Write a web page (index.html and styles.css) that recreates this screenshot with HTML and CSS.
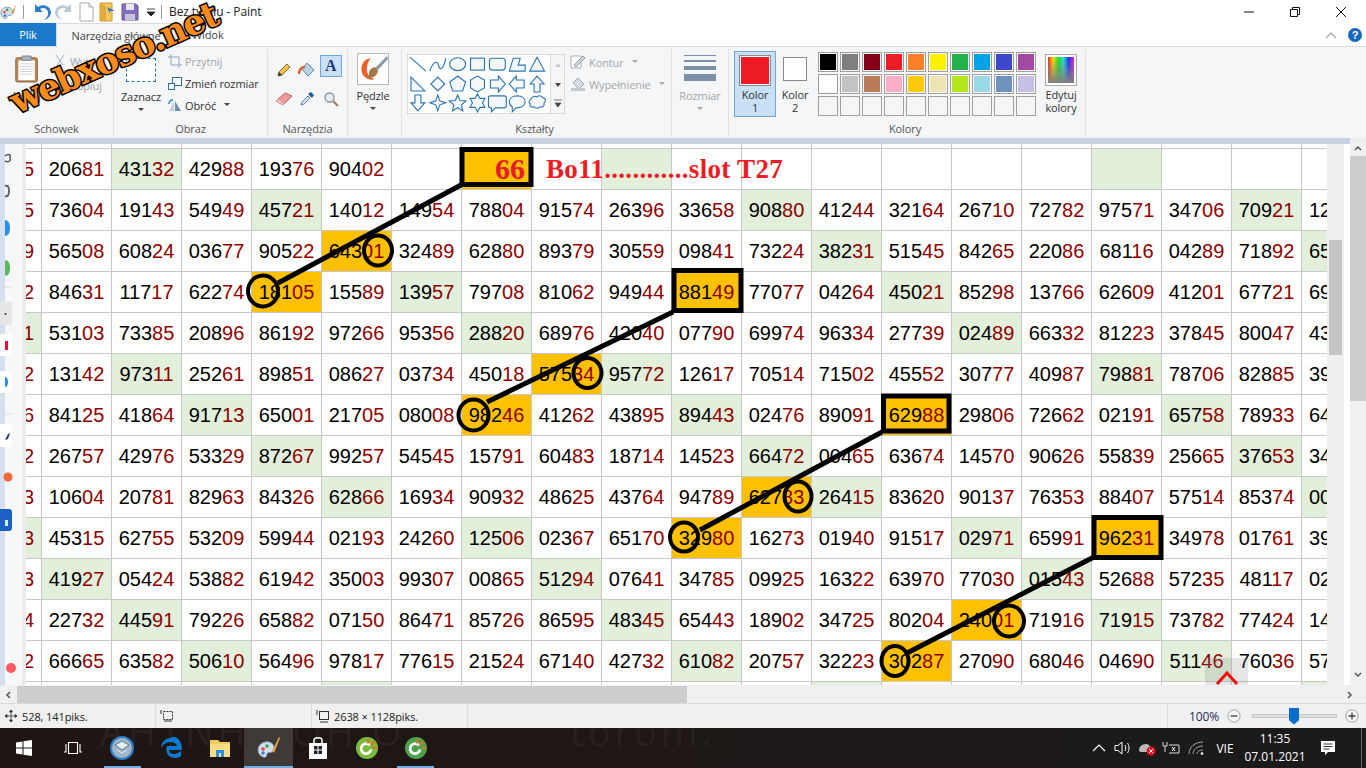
FILE: index.html
```html
<!DOCTYPE html>
<html lang="pl">
<head>
    <meta charset="UTF-8">
    <title>Bez tytułu - Paint</title>
    <link rel="stylesheet" href="styles.css">
</head>
<body>
    <div class="titlebar">
        <div class="quick">
            <svg class="q-icon" width="18" height="18" viewBox="0 0 20 20"><path d="M1 11c0-5 5-7 9-6 4 1 5 5 3 8-2 2-4 0-5 2s-1 3-3 2c-3-1-4-3-4-6z" fill="#cfe0ee" stroke="#7c98b0"/><circle cx="5" cy="10" r="1.5" fill="#e8483c"/><circle cx="8" cy="7.500" r="1.500" fill="#4a9a3c"/><circle cx="5.500" cy="14" r="1.500" fill="#3d7fd0"/><path d="M18 1l-5 10 2 1z" fill="#e58a2c"/></svg>
            <span class="q-sep"></span>
            <svg class="q-icon" width="20" height="20" viewBox="0 0 20 20"><path d="M3 2v8h8L8 7c3-2 7-1 8 3 .5 3-1 6-4 8 5-1 7-5 7-8-1-6-8-9-13-5z" fill="#2d7cc8"/></svg>
            <svg class="q-icon" width="20" height="20" viewBox="0 0 20 20"><path d="M17 2v8H9l3-3c-3-2-7-1-8 3-.5 3 1 6 4 8-5-1-7-5-7-8 1-6 8-9 13-5z" fill="#b9cad9"/></svg>
            <svg class="q-icon" width="20" height="20" viewBox="0 0 20 20"><path d="M4 1h9l4 4v14H4z" fill="#fff" stroke="#a8a8a8"/><path d="M13 1v4h4" fill="#eee" stroke="#a8a8a8"/></svg>
            <svg class="q-icon" width="20" height="20" viewBox="0 0 20 20"><path d="M2 1h12v18H2z" fill="#f3c95f" stroke="#c49a35"/><path d="M9 5l8 4-5 0v3z" fill="#2d7cc8"/><path d="M2 1l6 3v15l-6-1z" fill="#e4a93c"/></svg>
            <svg class="q-icon" width="20" height="20" viewBox="0 0 20 20"><path d="M2 2h14l2 2v14H2z" fill="#8470b8" stroke="#62508f"/><path d="M6 2h8v6H6z" fill="#e8e6f2"/><path d="M5 12h10v6H5z" fill="#c7bfdd"/></svg>
            <svg class="q-drop" width="10" height="10" viewBox="0 0 10 10"><path d="M1 1h8M1 4h8l-4 4z" fill="#222" stroke="#222" stroke-width=".8"/></svg>
            <span class="q-sep"></span>
            <span class="doc-title">Bez tytułu - Paint</span>
        </div>
        <div class="winctl">
            <svg width="46" height="22" viewBox="0 0 46 22"><path d="M18 11h10" stroke="#111"/></svg>
            <svg width="46" height="22" viewBox="0 0 46 22"><path d="M18.500 8.500h7v7h-7zM20.500 8.500v-2h7v7h-2" fill="none" stroke="#111"/></svg>
            <svg width="46" height="22" viewBox="0 0 46 22"><path d="M18 6l10 10M28 6L18 16" stroke="#111"/></svg>
        </div>
    </div>

    <div class="tabs">
        <div class="tab-file">Plik</div>
        <div class="tab tab-on">Narzędzia główne</div>
        <div class="tab">Widok</div>
        <div class="tabs-right">
            <svg width="14" height="8" viewBox="0 0 14 8"><path d="M2 7l5-5 5 5" fill="none" stroke="#aaa" stroke-width="1.300"/></svg>
            <span class="help">?</span>
        </div>
    </div>

    <div class="ribbon">
        <section class="group g-clip">
            <div class="group-body">
                <div class="big-btn paste">
                    <svg width="26" height="30" viewBox="0 0 30 32"><rect x="2" y="3" width="25" height="28" rx="2" fill="#b9865a" stroke="#8a6038"/><rect x="5" y="6" width="19" height="23" fill="#fff"/><path d="M7 10h15M7 13h15M7 16h15M7 19h15M7 22h15" stroke="#c6cbd2"/><rect x="9" y="1" width="11" height="5" rx="1" fill="#aab3bd" stroke="#747c86"/></svg>
                    <span>Wklej</span>
                    <i class="caret"></i>
                </div>
                <div class="small-col clip-col">
                    <div class="small off"><svg width="14" height="14" viewBox="0 0 14 14"><path d="M3 1l7 10M11 1L4 11" stroke="#a9b0b8" fill="none"/></svg>Wytnij</div>
                    <div class="small off"><svg width="14" height="14" viewBox="0 0 14 14"><path d="M2 2h7v10H2z" fill="#fff" stroke="#b5bcc4"/><path d="M4 4h3M4 6h3M4 8h3" stroke="#c6cbd2"/></svg>Kopiuj</div>
                </div>
            </div>
            <h3>Schowek</h3>
        </section>

        <section class="group g-image">
            <div class="group-body">
                <div class="big-btn select">
                    <span class="dashed"></span>
                    <span>Zaznacz</span>
                    <i class="caret"></i>
                </div>
                <div class="small-col image-col">
                    <div class="small off"><svg width="14" height="14" viewBox="0 0 14 14"><path d="M3 0v11h11M0 3h11v11" fill="none" stroke="#8ea3bc"/></svg>Przytnij</div>
                    <div class="small"><svg width="14" height="14" viewBox="0 0 14 14"><rect x="4.500" y="1.500" width="9" height="8" fill="#fff" stroke="#2a6fa8"/><rect x=".500" y="7.500" width="6" height="6" fill="#fff" stroke="#2a6fa8"/></svg>Zmień rozmiar</div>
                    <div class="small"><svg width="14" height="14" viewBox="0 0 14 14"><path d="M7 13V3l6 10z" fill="#6f8db0"/><path d="M1 13l5-9v9z" fill="#c8ccd0"/><path d="M1 6c0-3 2-4 4-4" fill="none" stroke="#2a86d0" stroke-width="1.500"/></svg>Obróć<i class="caret side"></i></div>
                </div>
            </div>
            <h3>Obraz</h3>
        </section>

        <section class="group g-tools">
            <div class="tool-grid">
                <span class="tool"><svg width="16" height="16" viewBox="0 0 16 16"><path d="M2 14l1-4 8-8 3 3-8 8z" fill="#f2c14e" stroke="#8a6a20"/><path d="M2 14l1-4 3 3z" fill="#333"/></svg></span>
                <span class="tool"><svg width="18" height="18" viewBox="0 0 18 18"><path d="M9 2l7 7-6 6-6-7z" fill="#b9d4ea" stroke="#5a86ab"/><path d="M1 13c0-5 3-7 6-7" fill="none" stroke="#e0622c" stroke-width="2.500"/></svg></span>
                <span class="tool tool-on">A</span>
                <span class="tool"><svg width="18" height="16" viewBox="0 0 18 16"><path d="M1 10l9-8 7 3-9 9z" fill="#f29a9a" stroke="#b56565"/><path d="M1 10l7 4 1-1-6-5z" fill="#e9c0c0"/></svg></span>
                <span class="tool"><svg width="16" height="16" viewBox="0 0 16 16"><path d="M2 14l1-3 6-6 2 2-6 6z" fill="#d6e4f0" stroke="#627f99"/><path d="M9 3l3-2 3 3-2 3z" fill="#1f5f96"/></svg></span>
                <span class="tool"><svg width="16" height="16" viewBox="0 0 16 16"><circle cx="6.500" cy="6.500" r="4.500" fill="#e2edf6" stroke="#8a949e" stroke-width="1.300"/><path d="M10 10l5 5" stroke="#a87a45" stroke-width="2"/></svg></span>
            </div>
            <h3>Narzędzia</h3>
        </section>

        <section class="group g-brush">
            <div class="group-body">
                <div class="big-btn">
                    <svg class="brush-icon" width="32" height="32" viewBox="0 0 32 32"><rect x=".500" y=".500" width="31" height="31" fill="#fff" stroke="#b8b8b8"/><path d="M14 5c-8 1-11 8-9 15 2 5 8 8 13 6-5-1-9-5-8-11 0-4 2-8 4-10z" fill="#e8622a"/><path d="M30 3L18 15l2 3L31 6z" fill="#8e9aa6"/><path d="M18 14c-4 1-6 3-6 7 0 2-1 3-3 4 5 1 11-1 12-7z" fill="#a5784a"/></svg>
                    <span>Pędzle</span>
                    <i class="caret"></i>
                </div>
            </div>
        </section>

        <section class="group g-shapes">
            <div class="group-body">
                <div class="gallery">
                    <svg class="gallery-shapes" width="143" height="58" viewBox="0 0 143 58" fill="#f4f8fc" stroke="#2b73ae" stroke-width="1.100">
                        <path d="M2 2l16 14" fill="none"/>
                        <path d="M22 16C26 4 30 6 31 11s5 3 7-8" fill="none"/>
                        <ellipse cx="50" cy="9" rx="8" ry="6.500"/>
                        <rect x="63" y="3" width="14" height="12"/>
                        <rect x="82" y="3" width="16" height="12" rx="3"/>
                        <path d="M102 16l4-13h7l-2 7h7v6z"/>
                        <path d="M130 2l7.500 14h-15z"/>
                        <path d="M3 22v14h14z"/>
                        <path d="M30 22l7 7-7 7-7-7z"/>
                        <path d="M50 21l8 6-3 9H45l-3-9z"/>
                        <path d="M70 21l7 4v8l-7 4-7-4v-8z"/>
                        <path d="M83 25h8v-4l7 8-7 8v-4h-8z"/>
                        <path d="M117 25h-8v-4l-7 8 7 8v-4h8z"/>
                        <path d="M130 21l7 8h-4v8h-6v-8h-4z"/>
                        <path d="M7 40h6v8h4l-7 8-7-8h4z"/>
                        <path d="M30 40l2 6 6 2-6 2-2 6-2-6-6-2 6-2z"/>
                        <path d="M50 40l2.400 5.600 6 .5-4.600 4 1.400 6-5.200-3.200-5.200 3.200 1.400-6-4.600-4 6-.5z"/>
                        <path d="M70 39l2.500 4.500h5L75 48l2.500 4.500h-5L70 57l-2.500-4.500h-5L65 48l-2.500-4.500h5z"/>
                        <path d="M83 41h14q2 0 2 2v8q0 2-2 2h-9l-4 4v-4h-1q-2 0-2-2v-8q0-2 2-2z"/>
                        <path d="M110 41c5 0 8 2.500 8 6s-3 6-8 6h-1l-4 4v-5c-2-1-3-3-3-5 0-3.500 3-6 8-6z"/>
                        <path d="M124 44c1-3 4-3 6-2 2-2 5-1 6 1 3 0 3 4 1 5 1 3-2 5-4 4-2 2-5 2-6 0-3 1-5-1-4-3-2-1-1-4 1-5z"/>
                    </svg>
                    <div class="gallery-scroll">
                        <svg width="14" height="58" viewBox="0 0 14 58"><path d="M4 12l3-4 3 4z" fill="#c4c8cc"/><path d="M4 28l3 4 3-4z" fill="#444"/><path d="M3 45h8M4 48h6l-3 4z" fill="#444" stroke="#444" stroke-width=".7"/></svg>
                    </div>
                </div>
                <div class="small-col shape-col">
                    <div class="small off"><svg width="16" height="16" viewBox="0 0 16 16"><path d="M1 2h10v12H1z" fill="#fff" stroke="#a9b0b8"/><path d="M4 11l9-9 2 2-9 9z" fill="#d0d4d8" stroke="#9aa0a6"/></svg>Kontur<i class="caret side pale"></i></div>
                    <div class="small off"><svg width="16" height="16" viewBox="0 0 16 16"><path d="M8 2l6 6-5 5-6-6z" fill="#d6dde5" stroke="#a0a8b0"/><path d="M1 12h14v3H1z" fill="#c4cad0"/></svg>Wypełnienie<i class="caret side pale"></i></div>
                </div>
            </div>
            <h3>Kształty</h3>
        </section>

        <section class="group g-size">
            <div class="big-btn size off">
                <span class="bars"><i class="b1"></i><i class="b2"></i><i class="b3"></i><i class="b4"></i></span>
                <span>Rozmiar</span>
                <i class="caret pale"></i>
            </div>
        </section>

        <section class="group g-colors">
            <div class="group-body">
                <div class="color-btn color-on">
                    <span class="swatch-big"><i class="red"></i></span>
                    <span>Kolor<br>1</span>
                </div>
                <div class="color-btn color-two">
                    <span class="swatch-mid"></span>
                    <span>Kolor<br>2</span>
                </div>
                <div class="palette">
                    <span class="sw"><i class="c-black"></i></span><span class="sw"><i class="c-gray"></i></span><span class="sw"><i class="c-maroon"></i></span><span class="sw"><i class="c-red"></i></span><span class="sw"><i class="c-orange"></i></span><span class="sw"><i class="c-yellow"></i></span><span class="sw"><i class="c-green"></i></span><span class="sw"><i class="c-sky"></i></span><span class="sw"><i class="c-indigo"></i></span><span class="sw"><i class="c-purple"></i></span>
                    <span class="sw"><i class="c-white"></i></span><span class="sw"><i class="c-silver"></i></span><span class="sw"><i class="c-brown"></i></span><span class="sw"><i class="c-pink"></i></span><span class="sw"><i class="c-gold"></i></span><span class="sw"><i class="c-cream"></i></span><span class="sw"><i class="c-lime"></i></span><span class="sw"><i class="c-ice"></i></span><span class="sw"><i class="c-steel"></i></span><span class="sw"><i class="c-lilac"></i></span>
                    <span class="sw"></span><span class="sw"></span><span class="sw"></span><span class="sw"></span><span class="sw"></span><span class="sw"></span><span class="sw"></span><span class="sw"></span><span class="sw"></span><span class="sw"></span>
                </div>
                <div class="edit-colors">
                    <span class="rainbow"></span>
                    <span>Edytuj<br>kolory</span>
                </div>
            </div>
            <h3>Kolory</h3>
        </section>
    </div>

    <div class="workspace">
        <svg class="dock" width="26" height="542" viewBox="0 0 26 542">
            <path d="M5 12c4-3 6-1 5 2 1 2-1 5-5 3" fill="none" stroke="#555" stroke-width="1.500"/>
            <path d="M5 42c3-1 4 1 4 5s-1 6-4 5" fill="none" stroke="#666" stroke-width="2"/>
            <path d="M5 76c3 0 5 3 5 8s-2 8-5 8z" fill="#2b8fea"/>
            <path d="M5 116c3 0 5 3 5 8s-2 8-5 8z" fill="#5cb860"/>
            <path d="M5 143h7" stroke="#ddd"/>
            <rect x="-5" y="158" width="17" height="23" rx="3" fill="#e6e6e6"/>
            <circle cx="5.500" cy="170" r="1" fill="#333"/>
            <rect x="-5" y="190" width="17" height="22" rx="3" fill="#fff"/>
            <rect x="5" y="197" width="3" height="9" fill="#e8112d"/>
            <rect x="-5" y="227" width="17" height="22" rx="3" fill="#fff"/>
            <path d="M5 233c2 0 3 2 3 5s-1 5-3 5z" fill="#2b8fea"/>
            <path d="M5 270h7" stroke="#ddd"/>
            <rect x="-5" y="280" width="17" height="23" rx="3" fill="#fff"/>
            <path d="M5 296l3-1 2-6-2 1z" fill="#24357f"/>
            <circle cx="8" cy="333" r="4.500" fill="#f4693a"/>
            <rect x="-5" y="365" width="17" height="22" rx="3" fill="#1d5fc4"/>
            <rect x="5" y="376" width="3" height="6" fill="#cfe"/>
            <circle cx="11" cy="524" r="5" fill="#ff5a66"/>
        </svg>

        <div class="sheet">
            <table class="grid">
                <tr class="top"><td></td><td></td><td></td><td></td><td></td><td></td><td></td><td></td><td></td><td></td><td></td><td></td><td></td><td></td><td></td><td></td><td></td><td></td><td></td><td></td></tr>
                <tr><td class="cut"><b>5</b></td><td>206<b>81</b></td><td class="g">431<b>32</b></td><td>429<b>88</b></td><td>193<b>76</b></td><td>904<b>02</b></td><td></td><td class="o big">66</td><td class="note">Bo11............slot T27</td><td class="g"></td><td></td><td></td><td></td><td></td><td></td><td></td><td class="g"></td><td></td><td></td><td></td></tr>
                <tr><td class="cut"><b>5</b></td><td>736<b>04</b></td><td>191<b>43</b></td><td>549<b>49</b></td><td class="g">457<b>21</b></td><td>140<b>12</b></td><td>149<b>54</b></td><td>788<b>04</b></td><td>915<b>74</b></td><td>263<b>96</b></td><td>336<b>58</b></td><td class="g">908<b>80</b></td><td>412<b>44</b></td><td>321<b>64</b></td><td>267<b>10</b></td><td>727<b>82</b></td><td>975<b>71</b></td><td>347<b>06</b></td><td class="g">709<b>21</b></td><td class="lead">12</td></tr>
                <tr><td class="cut"><b>9</b></td><td>565<b>08</b></td><td>608<b>24</b></td><td>036<b>77</b></td><td>905<b>22</b></td><td class="o">643<b>01</b></td><td>324<b>89</b></td><td>628<b>80</b></td><td>893<b>79</b></td><td>305<b>59</b></td><td>098<b>41</b></td><td>732<b>24</b></td><td class="g">382<b>31</b></td><td>515<b>45</b></td><td>842<b>65</b></td><td>220<b>86</b></td><td>681<b>16</b></td><td>042<b>89</b></td><td>718<b>92</b></td><td class="lead g">65</td></tr>
                <tr><td class="cut"><b>2</b></td><td>846<b>31</b></td><td>117<b>17</b></td><td>622<b>74</b></td><td class="o">181<b>05</b></td><td>155<b>89</b></td><td class="g">139<b>57</b></td><td>797<b>08</b></td><td>810<b>62</b></td><td>949<b>44</b></td><td class="o">881<b>49</b></td><td>770<b>77</b></td><td>042<b>64</b></td><td class="g">450<b>21</b></td><td>852<b>98</b></td><td>137<b>66</b></td><td>626<b>09</b></td><td>412<b>01</b></td><td>677<b>21</b></td><td class="lead">69</td></tr>
                <tr><td class="cut g"><b>1</b></td><td>531<b>03</b></td><td>733<b>85</b></td><td>208<b>96</b></td><td>861<b>92</b></td><td>972<b>66</b></td><td>953<b>56</b></td><td class="g">288<b>20</b></td><td>689<b>76</b></td><td>420<b>40</b></td><td>077<b>90</b></td><td>699<b>74</b></td><td>963<b>34</b></td><td>277<b>39</b></td><td class="g">024<b>89</b></td><td>663<b>32</b></td><td>812<b>23</b></td><td>378<b>45</b></td><td>800<b>47</b></td><td class="lead">43</td></tr>
                <tr><td class="cut"><b>2</b></td><td>131<b>42</b></td><td class="g">973<b>11</b></td><td>252<b>61</b></td><td>898<b>51</b></td><td>086<b>27</b></td><td>037<b>34</b></td><td>450<b>18</b></td><td class="o">575<b>34</b></td><td class="g">957<b>72</b></td><td>126<b>17</b></td><td>705<b>14</b></td><td>715<b>02</b></td><td>455<b>52</b></td><td>307<b>77</b></td><td>409<b>87</b></td><td class="g">798<b>81</b></td><td>787<b>06</b></td><td>828<b>85</b></td><td class="lead">39</td></tr>
                <tr><td class="cut"><b>6</b></td><td>841<b>25</b></td><td>418<b>64</b></td><td class="g">917<b>13</b></td><td>650<b>01</b></td><td>217<b>05</b></td><td>080<b>08</b></td><td class="o">982<b>46</b></td><td>412<b>62</b></td><td>438<b>95</b></td><td class="g">894<b>43</b></td><td>024<b>76</b></td><td>890<b>91</b></td><td class="o">629<b>88</b></td><td>298<b>06</b></td><td>726<b>62</b></td><td>021<b>91</b></td><td class="g">657<b>58</b></td><td>789<b>33</b></td><td class="lead">64</td></tr>
                <tr><td class="cut"><b>2</b></td><td>267<b>57</b></td><td>429<b>76</b></td><td>533<b>29</b></td><td class="g">872<b>67</b></td><td>992<b>57</b></td><td>545<b>45</b></td><td>157<b>91</b></td><td>604<b>83</b></td><td>187<b>14</b></td><td>145<b>23</b></td><td class="g">664<b>72</b></td><td>004<b>65</b></td><td>636<b>74</b></td><td>145<b>70</b></td><td>906<b>26</b></td><td>558<b>39</b></td><td>256<b>65</b></td><td class="g">376<b>53</b></td><td class="lead">34</td></tr>
                <tr><td class="cut"><b>3</b></td><td>106<b>04</b></td><td>207<b>81</b></td><td>829<b>63</b></td><td>843<b>26</b></td><td class="g">628<b>66</b></td><td>169<b>34</b></td><td>909<b>32</b></td><td>486<b>25</b></td><td>437<b>64</b></td><td>947<b>89</b></td><td class="o">627<b>83</b></td><td class="g">264<b>15</b></td><td>836<b>20</b></td><td>901<b>37</b></td><td>763<b>53</b></td><td>884<b>07</b></td><td>575<b>14</b></td><td>853<b>74</b></td><td class="lead g">00</td></tr>
                <tr><td class="cut g"><b>3</b></td><td>453<b>15</b></td><td>627<b>55</b></td><td>532<b>09</b></td><td>599<b>44</b></td><td>021<b>93</b></td><td>242<b>60</b></td><td class="g">125<b>06</b></td><td>023<b>67</b></td><td>651<b>70</b></td><td class="o">329<b>80</b></td><td>162<b>73</b></td><td>019<b>40</b></td><td>915<b>17</b></td><td class="g">029<b>71</b></td><td>659<b>91</b></td><td class="o">962<b>31</b></td><td>349<b>78</b></td><td>017<b>61</b></td><td class="lead">39</td></tr>
                <tr><td class="cut"><b>3</b></td><td class="g">419<b>27</b></td><td>054<b>24</b></td><td>538<b>82</b></td><td>619<b>42</b></td><td>350<b>03</b></td><td>993<b>07</b></td><td>008<b>65</b></td><td class="g">512<b>94</b></td><td>076<b>41</b></td><td>347<b>85</b></td><td>099<b>25</b></td><td>163<b>22</b></td><td>639<b>70</b></td><td>770<b>30</b></td><td class="g">015<b>43</b></td><td>526<b>88</b></td><td>572<b>35</b></td><td>481<b>17</b></td><td class="lead">02</td></tr>
                <tr><td class="cut"><b>4</b></td><td>227<b>32</b></td><td class="g">445<b>91</b></td><td>792<b>26</b></td><td>658<b>82</b></td><td>071<b>50</b></td><td>864<b>71</b></td><td>857<b>26</b></td><td>865<b>95</b></td><td class="g">483<b>45</b></td><td>654<b>43</b></td><td>189<b>02</b></td><td>347<b>25</b></td><td>802<b>04</b></td><td class="o">240<b>01</b></td><td>719<b>16</b></td><td class="g">719<b>15</b></td><td>737<b>82</b></td><td>774<b>24</b></td><td class="lead">14</td></tr>
                <tr><td class="cut"><b>2</b></td><td>666<b>65</b></td><td>635<b>82</b></td><td class="g">506<b>10</b></td><td>564<b>96</b></td><td>978<b>17</b></td><td>776<b>15</b></td><td>215<b>24</b></td><td>671<b>40</b></td><td>427<b>32</b></td><td class="g">610<b>82</b></td><td>207<b>57</b></td><td>322<b>23</b></td><td class="o">302<b>87</b></td><td>270<b>90</b></td><td>680<b>46</b></td><td>046<b>90</b></td><td class="g">511<b>46</b></td><td>760<b>36</b></td><td class="lead">57</td></tr>
                <tr><td></td><td></td><td></td><td></td><td></td><td class="g"></td><td></td><td></td><td></td><td></td><td></td><td></td><td class="g"></td><td></td><td></td><td></td><td></td><td></td><td></td><td class="g"></td></tr>
            </table>

            <svg class="marks" width="1301" height="541" viewBox="26 144 1301 541" fill="none" stroke="#000">
                <g stroke-width="5">
                    <rect x="462" y="149.500" width="69" height="35"/>
                    <rect x="674" y="270.500" width="67" height="40"/>
                    <rect x="883.500" y="396" width="65.500" height="35"/>
                    <rect x="1094" y="517.500" width="67" height="40"/>
                    <path d="M278 283L461 185M487 402L673 312M700 530L882 432M907 653L1094 557"/>
                </g>
                <g stroke-width="4">
                    <ellipse cx="263" cy="291" rx="15" ry="15.500"/>
                    <ellipse cx="378" cy="250.500" rx="14" ry="15"/>
                    <ellipse cx="473.500" cy="415" rx="15" ry="15.500"/>
                    <ellipse cx="587.500" cy="373" rx="14" ry="15"/>
                    <ellipse cx="684" cy="537" rx="14" ry="14.500"/>
                    <ellipse cx="798" cy="496.500" rx="13.500" ry="15"/>
                    <ellipse cx="895" cy="661" rx="13.500" ry="15"/>
                    <ellipse cx="1009" cy="621" rx="15" ry="15.500"/>
                </g>
                <rect x="1205" y="658" width="43" height="27" fill="#808080" fill-opacity=".2" stroke="none"/>
                <path d="M1217 684l10-11 10 11" stroke="#f01010" stroke-width="3"/>
            </svg>
        </div>

        <div class="inner-bar"><span class="inner-thumb"></span></div>
        <div class="inner-gap"></div>
        <div class="vscroll">
            <svg width="16" height="16" viewBox="0 0 16 16"><path d="M5 10l3-3 3 3" fill="none" stroke="#555" stroke-width="1.500"/></svg>
            <span class="vthumb"></span>
            <svg class="vdown" width="16" height="16" viewBox="0 0 16 16"><path d="M5 6l3 3 3-3" fill="none" stroke="#555" stroke-width="1.500"/></svg>
        </div>
    </div>

    <div class="hscroll">
        <svg width="17" height="16" viewBox="0 0 17 16"><path d="M10 5L7 8l3 3" fill="none" stroke="#555" stroke-width="1.500"/></svg>
        <span class="hthumb"></span>
        <svg class="hright" width="17" height="16" viewBox="0 0 17 16"><path d="M7 5l3 3-3 3" fill="none" stroke="#555" stroke-width="1.500"/></svg>
    </div>

    <div class="statusbar">
        <div class="st st-pos"><svg width="14" height="14" viewBox="0 0 14 14"><path d="M7 1v12M1 7h12M7 1L5.500 3h3zM7 13l-1.500-2h3zM1 7l2-1.500v3zM13 7l-2-1.500v3z" fill="#333" stroke="#333" stroke-width=".8"/></svg>528, 141piks.</div>
        <div class="st st-sel"><svg width="14" height="14" viewBox="0 0 14 14"><rect x="3.500" y="2.500" width="9" height="8" fill="none" stroke="#333" stroke-dasharray="2 1"/><path d="M1 1v4M4 12h8" stroke="#333"/></svg></div>
        <div class="st st-size"><svg width="14" height="14" viewBox="0 0 14 14"><rect x="3.500" y="2.500" width="9" height="8" fill="none" stroke="#333"/><path d="M1 1v5M4 13h8" stroke="#333"/></svg>2638 × 1128piks.</div>
        <div class="zoom">
            <span class="zoom-val">100%</span>
            <svg width="14" height="14" viewBox="0 0 16 16"><circle cx="8" cy="8" r="7" fill="#f6f6f6" stroke="#999"/><path d="M4 8h8" stroke="#444" stroke-width="1.500"/></svg>
            <span class="zoom-track"><i class="zoom-thumb"></i></span>
            <svg width="14" height="14" viewBox="0 0 16 16"><circle cx="8" cy="8" r="7" fill="#f6f6f6" stroke="#999"/><path d="M4 8h8M8 4v8" stroke="#444" stroke-width="1.500"/></svg>
        </div>
    </div>

    <div class="taskbar">
        <span class="wall">AHTNHICOH.O</span>
        <span class="wall wall-2">toronl.</span>
        <div class="task"><svg width="16" height="16" viewBox="0 0 16 16"><path d="M0 2.500l6.500-1V7.500H0zM7.500 1.300L16 0v7.500H7.500zM0 8.500h6.500v6L0 13.500zM7.500 8.500H16V16l-8.500-1.200z" fill="#fff"/></svg></div>
        <div class="task"><svg width="20" height="14" viewBox="0 0 20 14"><path d="M5.500 1.500h9v11h-9zM3 3v8H1M17 3v8h2" fill="none" stroke="#fff" stroke-width="1.100"/></svg></div>
        <div class="task run"><svg width="24" height="24" viewBox="0 0 24 24"><circle cx="12" cy="12" r="11" fill="#9fb6c9" stroke="#2d7cc8" stroke-width="2"/><path d="M5 9l7-4 7 4-7 5z" fill="#e4edf4" stroke="#5c7487"/><path d="M7 14l5 3 5-3" fill="none" stroke="#e4edf4"/></svg></div>
        <div class="task"><svg width="22" height="22" viewBox="0 0 22 22"><path d="M11 1C5 1 1 6 1 11c2-4 6-6 10-6 4 0 6 3 6 4H7c-2 6 1 12 8 12 2 0 4-.5 6-2v-5c-3 2-5 3-7 3-3 0-5-2-5-4h13c0-7-3-14-11-14z" fill="#0b7ad1"/></svg></div>
        <div class="task"><svg width="22" height="20" viewBox="0 0 22 20"><path d="M1 2h8l2 2h10v15H1z" fill="#f5c85c"/><path d="M1 6h20v13H1z" fill="#fbdc85"/><path d="M7 12h8v7H7z" fill="#2d8fe0"/><path d="M10 15h2v4h-2z" fill="#fbdc85"/></svg></div>
        <div class="task task-on"><svg width="24" height="24" viewBox="0 0 24 24"><path d="M1 14c0-6 6-9 11-8 5 1 6 6 4 9-2 3-5 0-6 3s-1 4-4 3c-3-1-5-4-5-7z" fill="#cfe0ee" stroke="#7c98b0"/><circle cx="6" cy="13" r="1.800" fill="#e8483c"/><circle cx="10" cy="10" r="1.800" fill="#4a9a3c"/><circle cx="6" cy="17" r="1.800" fill="#3d7fd0"/><path d="M22 1l-7 14 2 2 6-15z" fill="#e9a24a"/></svg></div>
        <div class="task"><svg width="20" height="22" viewBox="0 0 20 22"><path d="M1 6h18v16H1z" fill="#fff"/><path d="M6 6V3c0-3 8-3 8 0v3" fill="none" stroke="#fff" stroke-width="1.500"/><path d="M6 9h3.500v3.500H6zM10.500 9H14v3.500h-3.500zM6 13.500h3.500V17H6zM10.500 13.500H14V17h-3.500z" fill="#222"/></svg></div>
        <div class="task"><svg width="24" height="24" viewBox="0 0 24 24"><circle cx="12" cy="12" r="11" fill="#7cba3d"/><path d="M15 9.500a5 5 0 1 0 1 4" fill="none" stroke="#fff" stroke-width="2.800"/><path d="M13.500 3l-.5 4.500M19.500 5.500L16 9M22 11.500l-4 .5" stroke="#ea6a2a" stroke-width="2"/></svg></div>
        <div class="task run"><svg width="24" height="24" viewBox="0 0 24 24"><circle cx="12" cy="12" r="11" fill="#4ea24c"/><path d="M15 9.500a5 5 0 1 0 1 4" fill="none" stroke="#fff" stroke-width="2.800"/><path d="M13.500 3l-.5 4.500M19.500 5.500L16 9M22 11.500l-4 .5" stroke="#ea6a2a" stroke-width="2"/></svg></div>

        <div class="tray">
            <span class="ti"><svg width="14" height="8" viewBox="0 0 14 8"><path d="M1 7l6-6 6 6" fill="none" stroke="#fff" stroke-width="1.200"/></svg></span>
            <span class="ti"><svg width="18" height="16" viewBox="0 0 18 16"><path d="M1 5.500h3L8 2v12L4 10.500H1zM11 5c1 2 1 4 0 6M13.500 3c2 3 2 7 0 10" fill="none" stroke="#fff"/></svg></span>
            <span class="ti"><svg width="18" height="16" viewBox="0 0 18 16"><path d="M1 10c0-3 3-6 7-6 3 0 4 2 4 3 3 0 4 5 0 5H3c-1 0-2-1-2-2z" fill="#bbb"/><circle cx="13" cy="11" r="4.500" fill="#e81123"/><path d="M11 9l4 4M15 9l-4 4" stroke="#fff"/></svg></span>
            <span class="ti"><svg width="18" height="14" viewBox="0 0 18 14"><path d="M1 1v4h4V1M3 5v6M7 4h10v8H7" fill="none" stroke="#ddd"/><path d="M10 6l3 4M13 6l-3 4" stroke="#fff"/></svg></span>
            <span class="ti ti-wifi"><svg width="16" height="14" viewBox="0 0 16 14"><path d="M1 13c0-7 6-12 14-12M5 13c0-4 4-8 10-8M9 13c0-2 2-4 6-4" fill="none" stroke="#aaa"/><circle cx="14" cy="12.500" r="1.300" fill="#fff"/></svg></span>
            <span class="ti ti-lang">VIE</span>
            <span class="ti ti-clock">11:35<br>07.01.2021</span>
            <span class="ti ti-note"><svg width="16" height="16" viewBox="0 0 16 16"><path d="M1 1h14v11H8l-3 3v-3H1z" fill="#fff"/><path d="M3.500 4h9M3.500 6.500h9M3.500 9h6" stroke="#333"/></svg></span>
            <span class="ti-show"></span>
        </div>
    </div>

    <div class="watermark">webxoso.net</div>
</body>
</html>
```

FILE: styles.css
```css
* {
    box-sizing: border-box;
}

html, body {
    margin: 0;
    height: 100%;
}

body {
    width: 1366px;
    height: 768px;
    overflow: hidden;
    display: flex;
    flex-direction: column;
    position: relative;
    background: #f0f0f0;
    color: #333;
    font-family: "Open Sans", "Noto Sans", sans-serif;
    font-size: 11px;
    letter-spacing: -.1px;
}

/* title bar */
.titlebar {
    height: 23px;
    background: #fff;
    display: flex;
    align-items: center;
    justify-content: space-between;
}

.quick {
    display: flex;
    align-items: center;
}

.q-icon {
    margin-right: 2px;
}

.q-icon:first-child {
    margin-right: 5px;
}

.q-sep {
    width: 1px;
    height: 14px;
    background: #9a9a9a;
    margin-right: 8px;
}

.q-drop {
    margin: 2px 5px 0 4px;
}

.doc-title {
    font-size: 12px;
    color: #222;
    margin-left: -1px;
}

.winctl {
    display: flex;
    margin-right: 2px;
}

/* tabs */
.tabs {
    height: 24px;
    background: #fff;
    display: flex;
    align-items: stretch;
    border-bottom: 1px solid #dadbdc;
}

.tab-file {
    width: 56px;
    background: #1979ca;
    color: #fff;
    text-align: center;
    line-height: 23px;
}

.tab {
    padding: 0 16px;
    line-height: 24px;
    color: #444;
}

.tab-on {
    width: 120px;
    padding: 0 3px;
    text-align: center;
    background: #f5f6f7;
    border: 1px solid #dadbdc;
    border-bottom: 0;
    line-height: 23px;
    height: 24px;
    white-space: nowrap;
}

.tabs-right {
    margin-left: auto;
    display: flex;
    align-items: center;
    gap: 10px;
    padding-right: 4px;
}

.help {
    width: 14px;
    height: 14px;
    border-radius: 50%;
    background: #1769c0;
    color: #fff;
    font: bold 11px/14px "Liberation Sans", sans-serif;
    text-align: center;
}

/* ribbon */
.ribbon {
    height: 91px;
    background: #f5f6f7;
    display: flex;
    padding: 2px 0 1px;
}

.group {
    display: flex;
    flex-direction: column;
    border-right: 1px solid #e1e2e4;
    position: relative;
}

.group h3 {
    margin: 0;
    font-size: 11px;
    font-weight: 400;
    color: #555;
    text-align: center;
    line-height: 16px;
    padding-bottom: 0;
}

.group-body {
    flex: 1;
    display: flex;
}

.g-clip { width: 114px; }
.g-image { width: 154px; }
.g-tools { width: 80px; }
.g-brush { width: 54px; }
.g-shapes { width: 270px; }
.g-size { width: 57px; }
.g-colors { width: 357px; }

.g-shapes h3 {
    padding-right: 4px;
}

.g-colors h3 {
    padding-right: 4px;
}

.big-btn {
    display: flex;
    flex-direction: column;
    align-items: center;
    white-space: nowrap;
}

.big-btn span {
    line-height: 15px;
}

.caret {
    display: block;
    width: 0;
    height: 0;
    margin-top: 4px;
    border: 3px solid transparent;
    border-top: 3px solid #444;
    border-bottom: 0;
}

.caret.side {
    display: inline-block;
    margin: 0 0 2px 5px;
    vertical-align: middle;
}

.caret.pale {
    border-top-color: #aaa;
}

.off {
    color: #a3a6aa;
}

.small {
    display: flex;
    align-items: center;
    gap: 3px;
    height: 22px;
    white-space: nowrap;
}

.small-col {
    display: flex;
    flex-direction: column;
}

.paste {
    width: 36px;
    margin: 5px 0 0 9px;
}

.paste svg {
    margin-bottom: 4px;
}

.clip-col {
    margin: 0 0 0 8px;
}

.clip-col .small {
    height: 24px;
}

.select {
    width: 54px;
    padding-top: 9px;
}

.dashed {
    display: block;
    width: 30px;
    height: 24px;
    border: 1px dashed #2a6fa8;
    background: #fff;
    margin-bottom: 7px;
}

.image-col {
    margin: 1px 0 0 0;
}

.tool-grid {
    flex: 1;
    display: grid;
    grid-template-columns: repeat(3, 23.500px);
    grid-template-rows: 29px 29px;
    padding: 6px 0 0 4px;
}

.tool {
    display: flex;
    align-items: center;
    justify-content: center;
}

.tool-on {
    width: 22px;
    height: 22px;
    margin: 0 auto;
    background: #c9e0f7;
    border: 1px solid #6ea8e0;
    font: bold 16px "Liberation Serif", serif;
    color: #1f3b78;
}

.g-brush .big-btn {
    width: 50px;
    margin: 4px 0 0 0;
}

.brush-icon {
    margin-bottom: 3px;
}

.g-shapes .group-body {
    padding: 5px 0 0 5px;
}

.gallery {
    display: flex;
    width: 158px;
    height: 60px;
    background: #fff;
    border: 1px solid #dadbdc;
}

.gallery-shapes {
    display: block;
}

.gallery-scroll {
    width: 14px;
    border-left: 1px solid #dadbdc;
    background: #f5f6f7;
}

.shape-col {
    margin: -3px 0 0 5px;
}

.size {
    height: 100%;
}

.bars {
    display: flex;
    flex-direction: column;
    gap: 4px;
    width: 32px;
    height: 28px;
    margin: 6px 0 5px;
}

.bars i {
    display: block;
    flex: none;
    background: #7e8fa8;
}

.b1 { height: 1px; }
.b2 { height: 2px; }
.b3 { height: 4px; }
.b4 { height: 7px; }

.g-colors .group-body {
    padding: 2px 0 0 5px;
}

.color-btn {
    width: 42px;
    height: 66px;
    text-align: center;
    line-height: 13px;
    color: #333;
    padding-top: 3px;
}

.color-on {
    background: #c9e0f7;
    border: 1px solid #6ea8e0;
}

.color-two {
    margin: 0 9px 0 5px;
    width: 28px;
    border: 0;
}

.swatch-big {
    display: block;
    width: 32px;
    height: 31px;
    margin: 0 auto 2px;
    padding: 1px;
    border: 1px solid #8a8a8a;
    background: #fff;
}

.swatch-big i {
    display: block;
    height: 100%;
}

.red {
    background: #ed1c24;
}

.swatch-mid {
    display: block;
    width: 24px;
    height: 24px;
    margin: 3px auto 7px;
    background: #fff;
    border: 1px solid #8a8a8a;
}

.palette {
    display: grid;
    grid-template-columns: repeat(10, 20px);
    grid-template-rows: repeat(3, 20px);
    gap: 2px;
    margin-top: 1px;
}

.sw {
    display: block;
    border: 1px solid #a0a0a0;
    background: #f5f6f7;
    padding: 1px;
}

.sw i {
    display: block;
    height: 100%;
}

.c-black { background: #000; }
.c-gray { background: #7f7f7f; }
.c-maroon { background: #880015; }
.c-red { background: #ed1c24; }
.c-orange { background: #ff7f27; }
.c-yellow { background: #fff200; }
.c-green { background: #22b14c; }
.c-sky { background: #00a2e8; }
.c-indigo { background: #3f48cc; }
.c-purple { background: #a349a4; }
.c-white { background: #fff; }
.c-silver { background: #c3c3c3; }
.c-brown { background: #b97a57; }
.c-pink { background: #ffaec9; }
.c-gold { background: #ffc90e; }
.c-cream { background: #efe4b0; }
.c-lime { background: #b5e61d; }
.c-ice { background: #99d9ea; }
.c-steel { background: #7092be; }
.c-lilac { background: #c8bfe7; }

.edit-colors {
    margin-left: 7px;
    width: 36px;
    text-align: center;
    line-height: 13px;
    padding-top: 4px;
}

.rainbow {
    display: block;
    width: 30px;
    height: 30px;
    margin: 0 auto 3px;
    border: 2px solid #fff;
    outline: 1px solid #a8a8a8;
    background:
        linear-gradient(to bottom, transparent, #808080),
        linear-gradient(to right, #ff2020, #ffe000, #20e020, #20e0e0, #2020ff, #ff20c0);
}

/* canvas */
.workspace {
    height: 548px;
    display: flex;
    background: #fff;
    border-top: 6px solid #c8d2e3;
    border-bottom: 1px solid #f0f0f0;
}

.dock {
    flex: none;
    display: block;
    background: linear-gradient(to right, #d6e0f0 5px, #f7f7f7 5px, #f7f7f7 22px, #ececec 22px);
}

.sheet {
    width: 1301px;
    height: 541px;
    overflow: hidden;
    position: relative;
    background: #fff;
}

.grid {
    width: 1400px;
    table-layout: fixed;
    border-collapse: separate;
    border-spacing: 0;
    margin: -36px 0 0 -54px;
    font: 20px "Liberation Sans", Arial, sans-serif;
    letter-spacing: 0;
    color: #000;
}

.grid td {
    width: 70px;
    height: 41px;
    padding: 0;
    text-align: center;
    white-space: nowrap;
    border-right: 1px solid #c8c8c8;
    border-bottom: 1px solid #c8c8c8;
}

.grid b {
    font-weight: 400;
    color: #8f0000;
}

.grid .g {
    background: #e2efda;
}

.grid .o {
    background: #ffc000;
}

.grid .cut {
    text-align: right;
    padding-right: 7px;
}

.grid .lead {
    text-align: left;
    padding-left: 7px;
}

.grid .big {
    font: bold 30px "Liberation Serif", serif;
    color: #e81c24;
    text-align: right;
    padding-right: 6px;
}

.grid .note {
    font: bold 27px "Liberation Serif", serif;
    letter-spacing: .3px;
    color: #ed1c24;
    text-align: left;
    padding-left: 14px;
    overflow: visible;
}

.marks {
    position: absolute;
    top: 0;
    left: 0;
    pointer-events: none;
}

.inner-bar {
    width: 17px;
    background: #efefef;
    padding: 96px 2px 0;
}

.inner-thumb {
    display: block;
    height: 115px;
    background: #c4c4c4;
}

.inner-gap {
    width: 6px;
}

.vscroll {
    width: 16px;
    margin-top: -6px;
    padding-top: 2px;
    background: #f0f0f0;
    display: flex;
    flex-direction: column;
}

.vscroll svg {
    flex: none;
}

.vthumb {
    display: block;
    flex: none;
    width: 16px;
    height: 245px;
    background: #cdcdcd;
}

.vdown {
    margin-top: auto;
    margin-bottom: 2px;
}

.hscroll {
    height: 17px;
    background: #f0f0f0;
    display: flex;
    align-items: center;
}

.hthumb {
    display: block;
    width: 670px;
    height: 17px;
    background: #cdcdcd;
}

.hright {
    margin-left: auto;
    margin-right: 8px;
}

/* status bar */
.statusbar {
    height: 25px;
    background: #f0f0f0;
    border-top: 1px solid #d9d9d9;
    display: flex;
    align-items: center;
    color: #222;
}

.st {
    width: 156px;
    height: 100%;
    display: flex;
    align-items: center;
    gap: 4px;
    padding-left: 4px;
    border-right: 1px solid #dcdcdc;
}

.zoom {
    margin-left: auto;
    width: 199px;
    height: 100%;
    display: flex;
    align-items: center;
    border-left: 1px solid #dcdcdc;
    padding-left: 21px;
    gap: 8px;
}

.zoom-val {
    width: 30px;
    color: #1f2a5a;
    font-size: 12px;
}

.zoom-track {
    width: 85px;
    height: 4px;
    margin: 0 0 0 3px;
    background: #dfdfdf;
    border: 1px solid #c8c8c8;
    display: flex;
    align-items: center;
    padding-left: 36px;
}

.zoom-thumb {
    display: block;
    flex: none;
    width: 10px;
    height: 17px;
    background: #0a6ecd;
    clip-path: polygon(0 0, 100% 0, 100% 75%, 50% 100%, 0 75%);
}

/* taskbar */
.taskbar {
    height: 40px;
    background: linear-gradient(to right, #1f1512, #1e1818 60%, #1b1b1b);
    display: flex;
    align-items: stretch;
    position: relative;
    overflow: hidden;
    color: #fff;
    letter-spacing: 0;
}

.wall {
    position: absolute;
    top: 0;
    left: 100px;
    font-size: 38px;
    line-height: 6px;
    letter-spacing: 4px;
    color: #272120;
}

.wall-2 {
    left: 570px;
}

.task {
    width: 48.900px;
    display: flex;
    align-items: center;
    justify-content: center;
    position: relative;
}

.task.run::after {
    content: "";
    position: absolute;
    left: 6px;
    right: 6px;
    bottom: 0;
    height: 2px;
    background: #6cb2e8;
}

.task-on {
    background: #3f3a38;
    box-shadow: inset 0 -2px #6cb2e8;
}

.tray {
    margin-left: auto;
    display: flex;
    align-items: stretch;
    position: relative;
}

.ti {
    width: 24px;
    display: flex;
    align-items: center;
    justify-content: center;
    text-align: center;
}

.ti-wifi { width: 26px; }
.ti-lang { width: 32px; font-size: 12px; }
.ti-clock { width: 68px; font-size: 12px; line-height: 18px; }
.ti-note { width: 38px; }

.ti-show {
    width: 15px;
    border-right: 1px solid #666;
    margin-right: 4px;
}

/* logo stamped over the window */
.watermark {
    position: absolute;
    left: 2px;
    top: 37px;
    font: bold 35px "DejaVu Serif", serif;
    letter-spacing: -1.500px;
    color: #fb8c1c;
    -webkit-text-stroke: 3px #000;
    paint-order: stroke fill;
    transform: rotate(-24deg);
    white-space: nowrap;
}
```
